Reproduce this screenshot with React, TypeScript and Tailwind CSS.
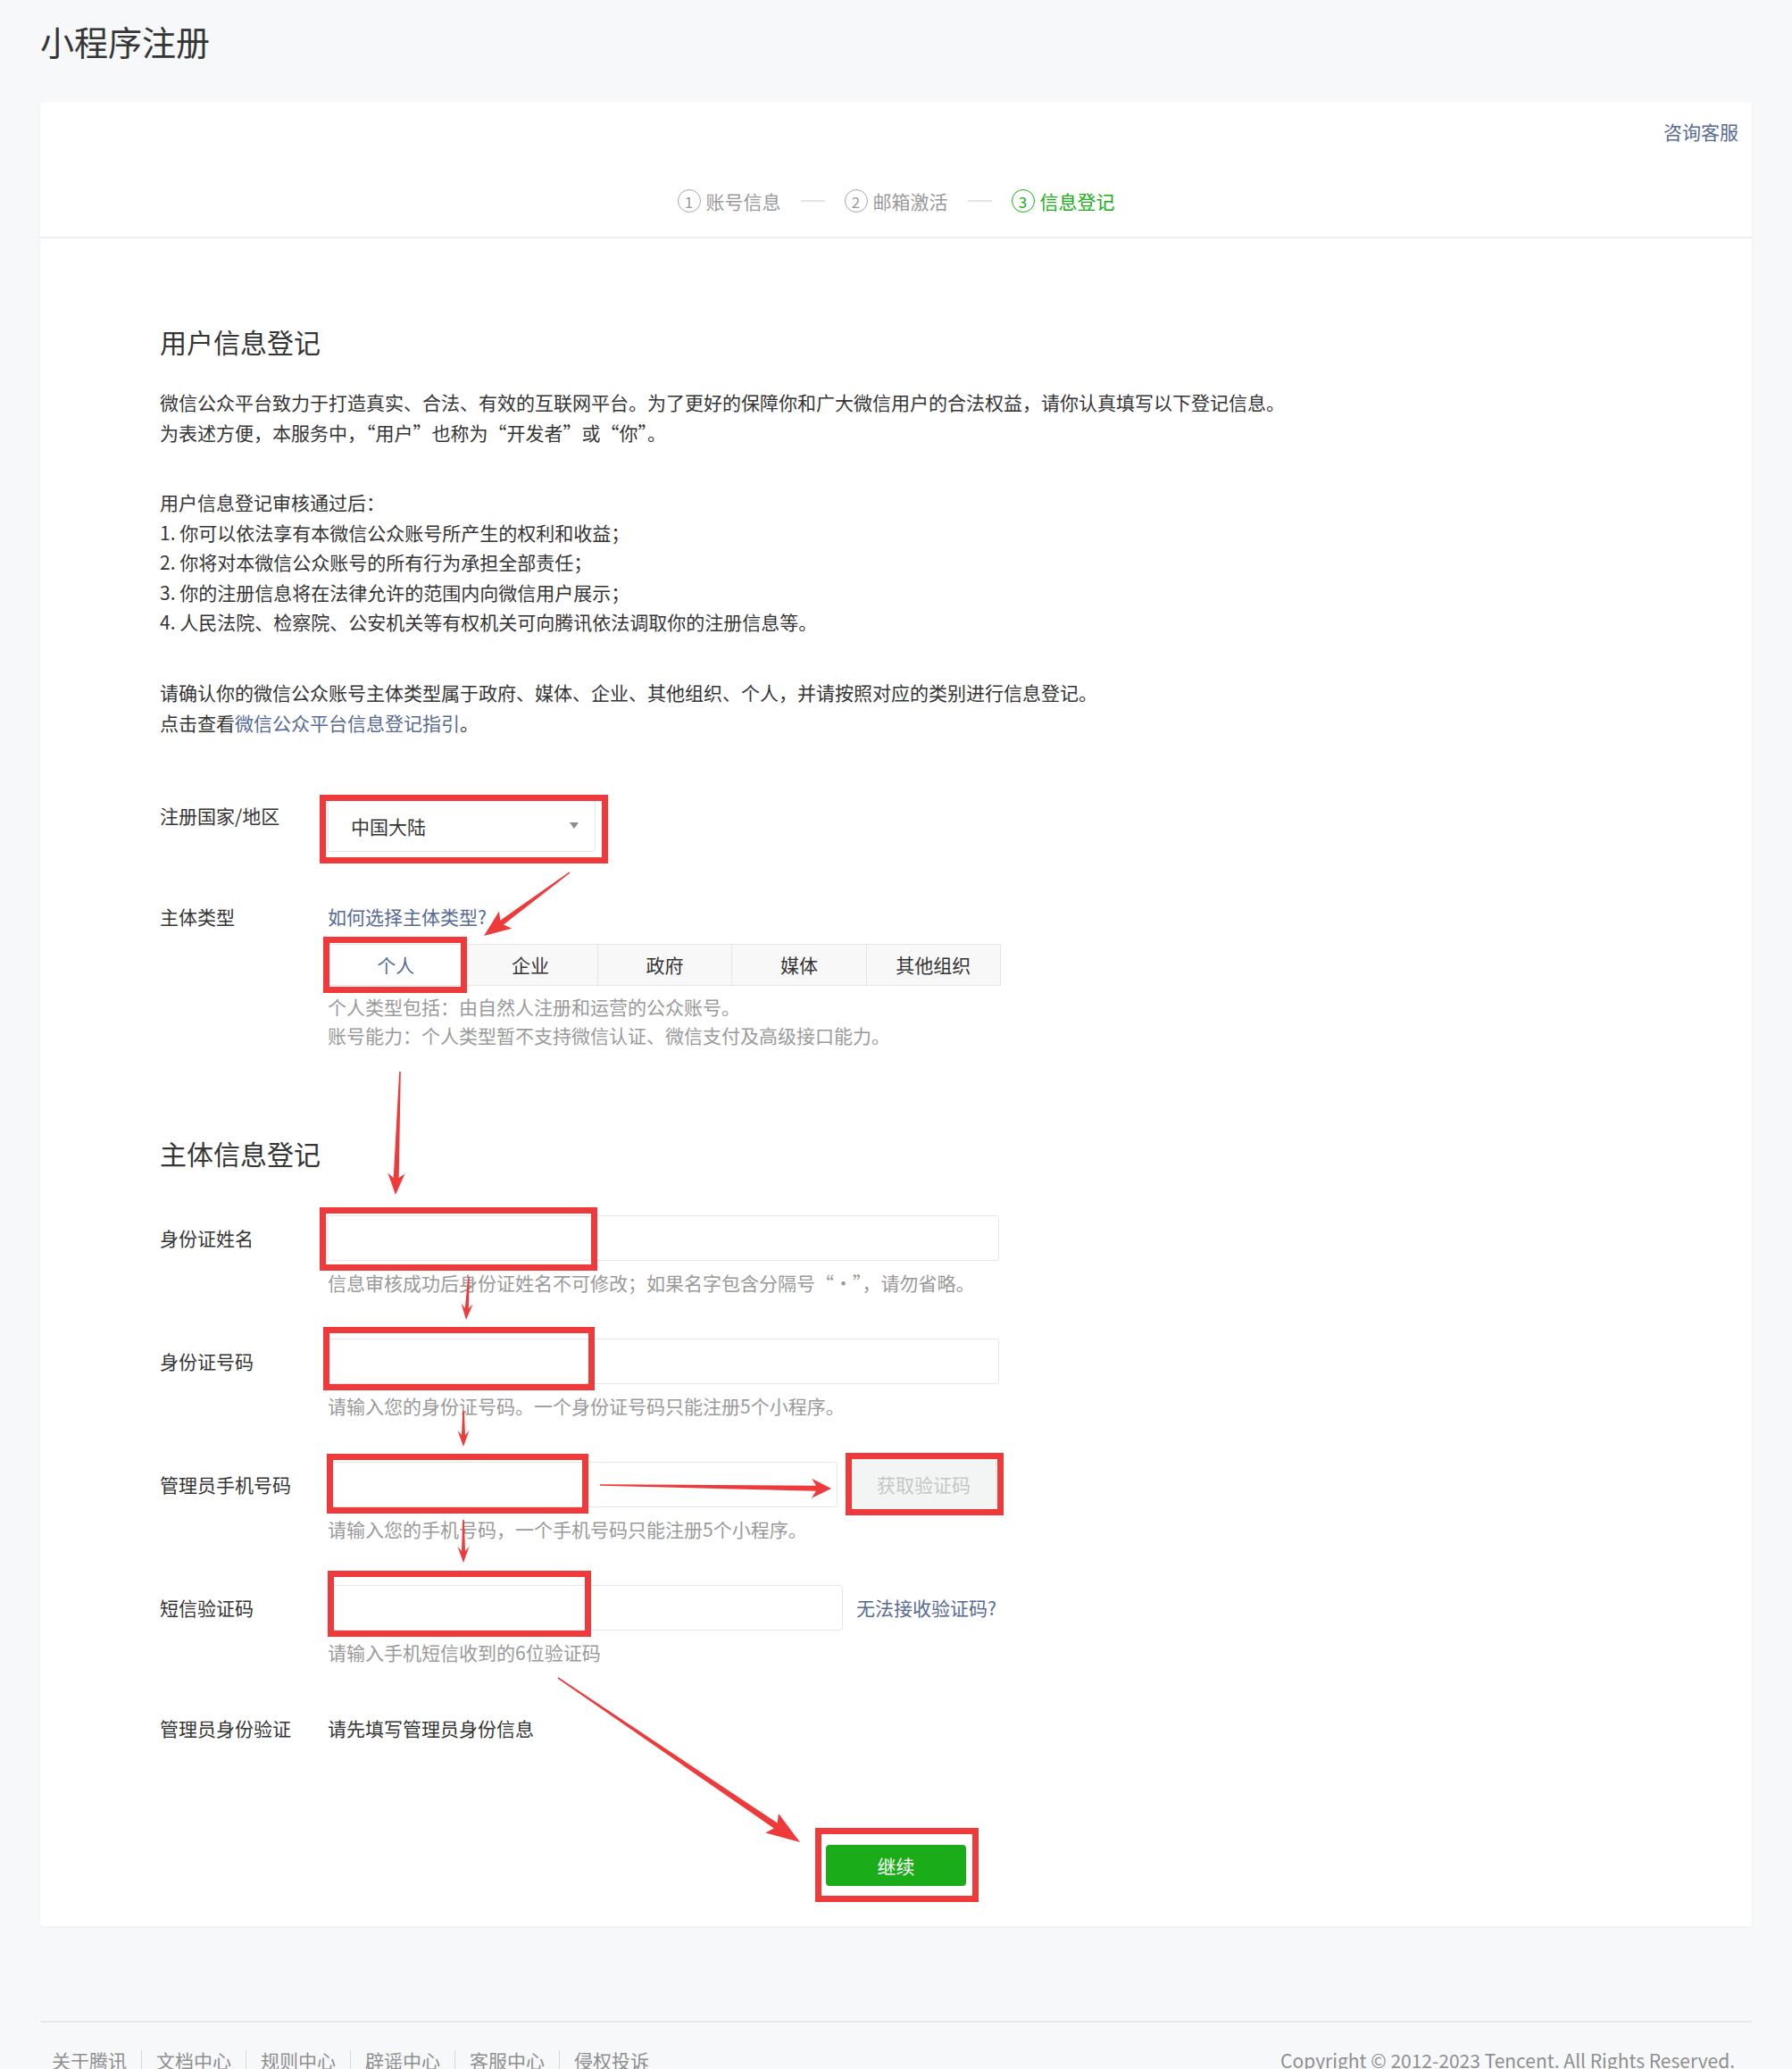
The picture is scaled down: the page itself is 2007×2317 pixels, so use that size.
import React from 'react';

const RED = '#ee3a3a';

interface Box {
  x1: number;
  y1: number;
  x2: number;
  y2: number;
}

// red annotation frames drawn over the screenshot
const BOXES: Box[] = [
  { x1: 358, y1: 890, x2: 681, y2: 967 },
  { x1: 362, y1: 1049, x2: 523, y2: 1112 },
  { x1: 358, y1: 1352, x2: 669, y2: 1423 },
  { x1: 362, y1: 1486, x2: 666, y2: 1557 },
  { x1: 366, y1: 1628, x2: 659, y2: 1695 },
  { x1: 947, y1: 1627, x2: 1124, y2: 1697 },
  { x1: 367, y1: 1759, x2: 662, y2: 1833 },
  { x1: 913, y1: 2047, x2: 1096, y2: 2130 },
];

interface Arrow {
  from: [number, number];
  to: [number, number];
  shaft: number;
  headLen: number;
  headW: number;
}

const ARROWS: Arrow[] = [
  { from: [638, 977], to: [542, 1048], shaft: 6, headLen: 30, headW: 24 },
  { from: [448, 1200], to: [443, 1338], shaft: 6, headLen: 24, headW: 19 },
  { from: [525, 1430], to: [522, 1478], shaft: 4, headLen: 18, headW: 13 },
  { from: [519, 1580], to: [519, 1620], shaft: 4, headLen: 18, headW: 13 },
  { from: [672, 1663], to: [931, 1667], shaft: 6, headLen: 22, headW: 22 },
  { from: [519, 1702], to: [519, 1750], shaft: 4, headLen: 18, headW: 13 },
  { from: [625, 1879], to: [896, 2063], shaft: 7, headLen: 38, headW: 26 },
];

function arrowPoints({ from, to, shaft, headLen, headW }: Arrow) {
  const [x1, y1] = from;
  const [x2, y2] = to;
  const len = Math.hypot(x2 - x1, y2 - y1);
  const ux = (x2 - x1) / len;
  const uy = (y2 - y1) / len;
  const px = -uy;
  const py = ux;
  const bx = x2 - ux * headLen;
  const by = y2 - uy * headLen;
  // shaft joins the head a little forward, gives the swept-back barbs
  const jx = bx + ux * 5;
  const jy = by + uy * 5;
  const pts: [number, number][] = [
    [x1 + px * 0.8, y1 + py * 0.8],
    [jx + (px * shaft) / 2, jy + (py * shaft) / 2],
    [bx + (px * headW) / 2, by + (py * headW) / 2],
    [x2, y2],
    [bx - (px * headW) / 2, by - (py * headW) / 2],
    [jx - (px * shaft) / 2, jy - (py * shaft) / 2],
    [x1 - px * 0.8, y1 - py * 0.8],
  ];
  return pts.map((p) => `${p[0].toFixed(1)},${p[1].toFixed(1)}`).join(' ');
}

function Step({ n, label, active }: { n: string; label: string; active?: boolean }) {
  return (
    <div className={`flex items-center gap-[6px] ${active ? 'text-[#1aad19]' : 'text-[#9a9a9a]'}`}>
      <span
        className={`flex h-[26px] w-[26px] items-center justify-center rounded-full border-[1.5px] text-[17px] leading-none ${
          active ? 'border-[#1aad19]' : 'border-[#a8a8a8]'
        }`}
      >
        {n}
      </span>
      <span>{label}</span>
    </div>
  );
}

function StepLine() {
  return <span className="mx-[22px] h-[1.5px] w-[27px] bg-[#e3e3e3]" />;
}

function InputRow({ label, hint, first, children }: { label: string; hint?: string; first?: boolean; children: React.ReactNode }) {
  return (
    <div className={`flex ${first ? 'mt-[49px]' : 'mt-[46px]'}`}>
      <div className="flex h-[51px] w-[188px] shrink-0 items-center">{label}</div>
      <div>
        <div className="flex h-[51px] items-center">{children}</div>
        {hint && <p className="mt-[7px] leading-[34px] text-[#9a9a9a]">{hint}</p>}
      </div>
    </div>
  );
}

const TYPES = ['个人', '企业', '政府', '媒体', '其他组织'];
const FOOTER_LINKS = ['关于腾讯', '文档中心', '规则中心', '辟谣中心', '客服中心', '侵权投诉'];

export default function App() {
  return (
    <div className="relative h-[2317px] overflow-hidden bg-[#f6f8f9] font-['Microsoft_YaHei','Noto_Sans_CJK_SC','Noto_Sans',sans-serif] text-[21px] leading-[34px] text-[#353535]">
      <h1 className="px-[45px] pt-[19px] text-[38px] leading-[53px] font-normal">小程序注册</h1>

      {/* Card */}
      <div className="mx-[45px] mt-[42px] rounded-[3px] bg-white shadow-[0_1px_4px_rgba(0,0,0,0.04)]">
        <div className="flex h-[153px] flex-col border-b-2 border-[#ededed]">
          <div className="flex justify-end pr-[15px] pt-[18px]">
            <a className="leading-[30px] text-[#576b95]">咨询客服</a>
          </div>
          <div className="mt-[48px] flex items-center justify-center leading-[30px]">
            <Step n="1" label="账号信息" />
            <StepLine />
            <Step n="2" label="邮箱激活" />
            <StepLine />
            <Step n="3" label="信息登记" active />
          </div>
        </div>

        <div className="px-[134px] pb-[45px] pt-[94px]">
          <h2 className="text-[30px] leading-[42px] font-normal">用户信息登记</h2>
          <p className="mt-[30px]">
            微信公众平台致力于打造真实、合法、有效的互联网平台。为了更好的保障你和广大微信用户的合法权益，请你认真填写以下登记信息。
            <br />
            为表述方便，本服务中，“用户”也称为“开发者”或“你”。
          </p>
          <div className="mt-[45px] leading-[33.5px]">
            <p>用户信息登记审核通过后：</p>
            <p>1. 你可以依法享有本微信公众账号所产生的权利和收益；</p>
            <p>2. 你将对本微信公众账号的所有行为承担全部责任；</p>
            <p>3. 你的注册信息将在法律允许的范围内向微信用户展示；</p>
            <p>4. 人民法院、检察院、公安机关等有权机关可向腾讯依法调取你的注册信息等。</p>
          </div>
          <p className="mt-[44px]">
            请确认你的微信公众账号主体类型属于政府、媒体、企业、其他组织、个人，并请按照对应的类别进行信息登记。
            <br />
            点击查看<a className="text-[#576b95]">微信公众平台信息登记指引</a>。
          </p>

          {/* Country */}
          <div className="mt-[70px] flex">
            <div className="w-[188px] shrink-0">注册国家/地区</div>
            <div className="flex h-[58px] w-[300px] items-center justify-between rounded-[3px] border-[1.5px] border-[#e4e4e4] pl-[25px] pr-[18px]">
              <span>中国大陆</span>
              <span className="h-0 w-0 border-x-[5px] border-t-[7px] border-x-transparent border-t-[#8c8c8c]" />
            </div>
          </div>

          {/* Type */}
          <div className="mt-[55px] flex">
            <div className="w-[188px] shrink-0">主体类型</div>
            <div>
              <a className="text-[#576b95]">如何选择主体类型?</a>
              <div className="mt-[14px] grid h-[47px] w-[754px] grid-cols-5 border-[1.5px] border-[#e6e6e6] bg-[#f8f8f8]">
                {TYPES.map((t, i) => (
                  <div
                    key={t}
                    className={`flex items-center justify-center ${i > 0 ? 'border-l-[1.5px] border-[#e6e6e6]' : ''} ${
                      i === 0 ? 'bg-white text-[#576b95]' : ''
                    }`}
                  >
                    {t}
                  </div>
                ))}
              </div>
              <div className="mt-[7px] leading-[32px] text-[#9a9a9a]">
                <p>个人类型包括：由自然人注册和运营的公众账号。</p>
                <p>账号能力：个人类型暂不支持微信认证、微信支付及高级接口能力。</p>
              </div>
            </div>
          </div>

          <h2 className="mt-[95px] text-[30px] leading-[42px] font-normal">主体信息登记</h2>

          <InputRow first label="身份证姓名" hint="信息审核成功后身份证姓名不可修改；如果名字包含分隔号“·”，请勿省略。">
            <div className="h-full w-[752px] rounded-[3px] border-[1.5px] border-[#e7e7e7]" />
          </InputRow>
          <InputRow label="身份证号码" hint="请输入您的身份证号码。一个身份证号码只能注册5个小程序。">
            <div className="h-full w-[752px] rounded-[3px] border-[1.5px] border-[#e7e7e7]" />
          </InputRow>
          <InputRow label="管理员手机号码" hint="请输入您的手机号码，一个手机号码只能注册5个小程序。">
            <div className="h-full w-[571px] rounded-[3px] border-[1.5px] border-[#e7e7e7]" />
            <button className="ml-[15px] h-[58px] w-[163px] rounded-[3px] border-[1.5px] border-[#e2e4e4] bg-[#f3f5f5] text-[#c4c7c7]">
              获取验证码
            </button>
          </InputRow>
          <InputRow label="短信验证码" hint="请输入手机短信收到的6位验证码">
            <div className="h-full w-[577px] rounded-[3px] border-[1.5px] border-[#e7e7e7]" />
            <a className="ml-[15px] text-[#576b95]">无法接收验证码?</a>
          </InputRow>

          <div className="mt-[51px] flex">
            <div className="w-[188px] shrink-0">管理员身份验证</div>
            <div>请先填写管理员身份信息</div>
          </div>

          <div className="mt-[114px] flex justify-center">
            <button className="h-[46px] w-[157px] rounded-[4px] bg-[#1aad19] text-white">继续</button>
          </div>
        </div>
      </div>

      {/* Footer */}
      <footer className="mx-[45px] mt-[106px] border-t-2 border-[#e4e8eb]">
        <div className="flex items-center justify-between pl-[13px] pr-[19px] pt-[25px] text-[#8f8f8f]">
          <div className="flex items-center">
            {FOOTER_LINKS.map((l, i) => (
              <a
                key={l}
                className={`px-[16px] leading-[22px] ${i === 0 ? 'pl-0' : 'border-l-[1.5px] border-[#d9d9d9]'}`}
              >
                {l}
              </a>
            ))}
          </div>
          <span>Copyright © 2012-2023 Tencent. All Rights Reserved.</span>
        </div>
      </footer>

      {/* Annotation overlay */}
      <svg
        className="pointer-events-none absolute left-0 top-0"
        width="2007"
        height="2317"
        viewBox="0 0 2007 2317"
      >
        {BOXES.map((b, i) => (
          <rect
            key={i}
            x={b.x1 + 3.5}
            y={b.y1 + 3.5}
            width={b.x2 - b.x1 - 7}
            height={b.y2 - b.y1 - 7}
            fill="none"
            stroke={RED}
            strokeWidth={7}
          />
        ))}
        {ARROWS.map((a, i) => (
          <polygon key={i} points={arrowPoints(a)} fill={RED} />
        ))}
      </svg>
    </div>
  );
}
